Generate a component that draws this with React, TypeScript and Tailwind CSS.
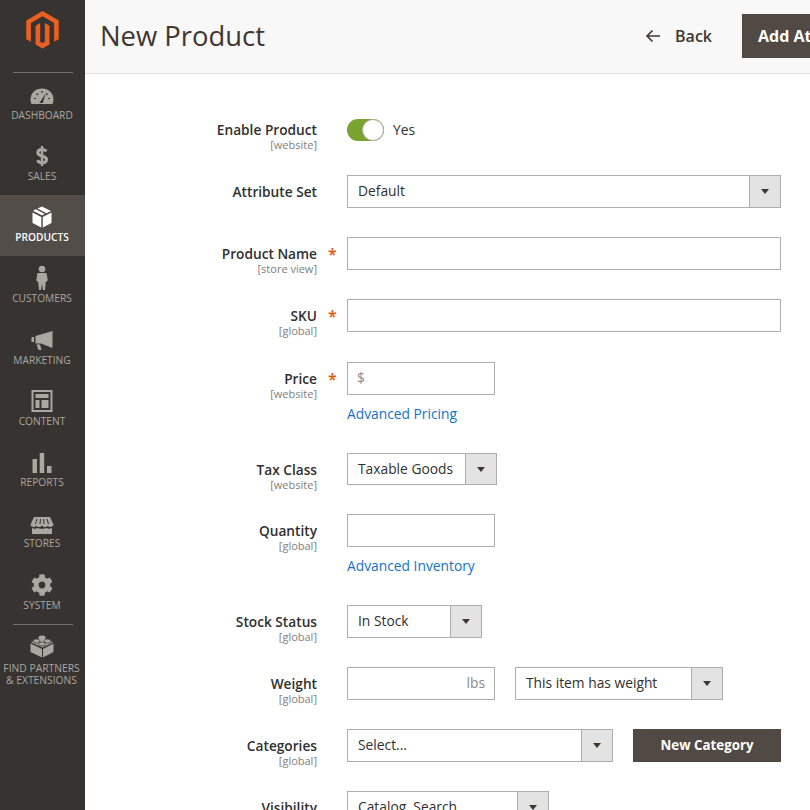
import type { ReactNode } from "react";
import { FaCog } from "react-icons/fa";

const Logo = () => (
  <svg width="33" height="38" viewBox="1.6 0 20.8 24" fill="#ec5f23">
    <path d="M12 24l-4.455-2.572v-12l2.97-1.715v12.001l1.485.902 1.485-.902V7.713l2.971 1.715v12L12 24zM22.391 6v12l-2.969 1.714V7.713L12 3.43 4.574 7.713v12L1.609 18V6L12 0l10.391 6z" />
  </svg>
);

const Gauge = () => (
  <svg width="24" height="24" viewBox="0 0 24 24">
    <path d="M1.500 21C.8 19.500.5 18 .5 16.500 .5 10 5.600 5.500 12 5.500S23.500 10 23.500 16.500C23.500 18 23.200 19.500 22.500 21Z" fill="#aaa6a0" />
    <path d="M9.500 20 15.500 10.500 12.800 20Z" fill="#373330" />
    <path d="M4 15.500H6M18 15.500H20M6.500 10.500 8 12M12 8V10M17.500 10.500 16 12" stroke="#373330" strokeWidth="1.200" />
  </svg>
);

const Dollar = () => (
  <svg width="24" height="24" viewBox="0 0 24 24" fill="none" stroke="#aaa6a0">
    <path d="M16.200 7.500C15.500 6.200 14 5.500 12 5.500 9.300 5.500 7.800 6.800 7.800 8.700 7.800 13 16.500 11 16.500 15.500 16.500 17.500 14.800 18.700 12 18.700 9.800 18.700 8.300 17.800 7.500 16.300" strokeWidth="3" />
    <path d="M12 2V22" strokeWidth="2.400" />
  </svg>
);

const Box = ({ color }: { color: string }) => (
  <svg width="24" height="24" viewBox="0 0 24 24" fill={color}>
    <path d="M2.500 7.500 11.300 12V22.500L2.500 18Z" />
    <path d="M21.500 7.500 12.800 12V22.500L21.500 18Z" />
    <path d="M7.500 3.500 12 1.500 21 6 16.500 8.200Z" />
    <path d="M5.800 4.300 3 5.700 12 10.300 14.800 9Z" />
  </svg>
);

const Person = () => (
  <svg width="24" height="24" viewBox="0 0 24 24" fill="#aaa6a0">
    <circle cx="12" cy="3" r="3.300" />
    <path d="M7.500 7H16.500L17.800 14.500 15.800 16 15 24H13L12 18 11 24H9L8.200 16 6.200 14.500Z" />
  </svg>
);

const Megaphone = () => (
  <svg width="24" height="24" viewBox="0 0 24 24" fill="#aaa6a0">
    <path d="M5.500 8 22.500 3V20L11 15.500H5.500Z" />
    <path d="M1.500 9H4V14H1.500Z" />
    <path d="M6.500 16.500H10L11.500 22H8.500Z" />
  </svg>
);

const Content = () => (
  <svg width="24" height="24" viewBox="0 0 24 24" fill="#aaa6a0">
    <path d="M1.500 1H22.500V23H1.500ZM3.500 3V21H20.500V3Z" fillRule="evenodd" />
    <path d="M5.500 5H18.500V9H5.500ZM5.500 11H9.500V19H5.500ZM11.500 11H18.500V19H11.500Z" />
  </svg>
);

const Reports = () => (
  <svg width="24" height="24" viewBox="0 0 24 24" fill="#aaa6a0">
    <path d="M2.500 9H7V23H2.500ZM9.700 3H14.200V23H9.700ZM17 16H21.500V23H17Z" />
  </svg>
);

const Stores = () => (
  <svg width="24" height="24" viewBox="0 0 24 24" fill="#aaa6a0">
    <path d="M.5 13.500 4 6H20L23.500 13.500C23.500 15 22 16 20.500 16 19 16 18 15.300 18 14.500 18 15.300 16.500 16 15 16S12.500 15.300 12 14.500C11.500 15.300 10.500 16 9 16S6 15.300 6 14.500C6 15.300 5 16 3.500 16 2 16 .5 15 .5 13.500Z" />
    <path d="M2 17C4 18 6 17.800 7.500 17 9.500 18 14.500 18 16.500 17 18 17.800 20 18 22 17V23H2Z" />
    <path d="M7 8 5.500 13M10.500 8 10 13M13.500 8 14 13M17 8 18.500 13" stroke="#373330" strokeWidth="1" />
  </svg>
);

const Lego = () => (
  <svg width="24" height="24" viewBox="0 0 24 24" fill="#aaa6a0">
    <path d="M.5 9.500 12 15V23.500L.5 18Z" />
    <path d="M23.500 9.500 13 15V23.500L23.500 18Z" />
    <path d="M12 3 23 8.300 12.500 13.500 1 8.300Z" />
    <ellipse cx="12" cy="3.500" rx="3.500" ry="2" />
    <ellipse cx="6.500" cy="7" rx="3.500" ry="2" stroke="#373330" strokeWidth=".7" />
    <ellipse cx="17.500" cy="7" rx="3.500" ry="2" stroke="#373330" strokeWidth=".7" />
    <ellipse cx="12" cy="10" rx="3.500" ry="2" stroke="#373330" strokeWidth=".7" />
  </svg>
);

const NavItem = ({ icon, label, active }: { icon: ReactNode; label: string; active?: boolean }) => (
  <div className={`flex h-[61.25px] flex-col items-center pt-[10px] pr-[1px] ${active ? "bg-[#524d49]" : ""}`}>
    <div className="flex h-[24px] w-[24px] items-center justify-center">{icon}</div>
    <span className={`mt-[1px] whitespace-nowrap text-[10.2px] leading-[14px] ${active ? "font-semibold text-white" : "text-[#aaa6a0]"}`}>
      {label}
    </span>
  </div>
);

const Sidebar = () => (
  <aside className="flex h-[810px] w-[85px] shrink-0 flex-col bg-[#373330]">
    <div className="flex h-[72.5px] shrink-0 flex-col items-center pt-[11px]">
      <Logo />
      <div className="mt-[23px] h-px w-[60px] bg-[#736e69]" />
    </div>
    <NavItem icon={<Gauge />} label="DASHBOARD" />
    <NavItem icon={<Dollar />} label="SALES" />
    <NavItem icon={<Box color="#ffffff" />} label="PRODUCTS" active />
    <NavItem icon={<Person />} label="CUSTOMERS" />
    <NavItem icon={<Megaphone />} label="MARKETING" />
    <NavItem icon={<Content />} label="CONTENT" />
    <NavItem icon={<Reports />} label="REPORTS" />
    <NavItem icon={<Stores />} label="STORES" />
    <NavItem icon={<FaCog size={22} color="#aaa6a0" />} label="SYSTEM" />
    <div className="mx-auto h-px w-[60px] bg-[#736e69]" />
    <div className="flex flex-col items-center pt-[9px] pr-[2px]">
      <Lego />
      <span className="mt-[4px] whitespace-nowrap text-center text-[10.3px] leading-[12.5px] text-[#aaa6a0]">
        FIND PARTNERS
        <br />& EXTENSIONS
      </span>
    </div>
  </aside>
);

const Header = () => (
  <header className="flex h-[74px] shrink-0 items-center border-b border-[#e3e3e3] bg-[#f8f8f8] pb-[2px] pl-[15px]">
    <h1 className="text-[27.4px] leading-[36px] text-[#41362f]">New Product</h1>
    <div className="ml-auto flex items-center">
      <svg width="16" height="14" viewBox="0 0 16 14" fill="none" stroke="#41362f" strokeWidth="1.600">
        <path d="M15 7H2M7.500 1.500 2 7 7.500 12.500" />
      </svg>
      <span className="ml-[14px] text-[16px] font-semibold text-[#41362f]">Back</span>
      <div className="ml-[30px] flex h-[44px] w-[68px] items-center overflow-hidden bg-[#514943] pl-[16px] text-[16px] font-bold whitespace-nowrap text-white">
        Add Attribute
      </div>
    </div>
  </header>
);

const Row = ({ label, scope, required, children, sub, className = "" }: { label: string; scope?: string; required?: boolean; children: ReactNode; sub?: string; className?: string }) => (
  <div className={`mb-[29px] flex shrink-0 ${className}`}>
    <div className="-mb-[5px] w-[232px] shrink-0 pt-[8px] text-right">
      <div className="text-[13.7px] leading-[18px] font-semibold text-[#303030]">{label}</div>
      {scope && <div className="text-[11px] leading-[12px] text-[#808080]">{scope}</div>}
    </div>
    <div className="w-[30px] shrink-0 pt-[8px] pl-[11px] text-[16px] leading-[18px] font-semibold">
      {required && <span className="text-[#eb5202]">*</span>}
    </div>
    <div className="min-w-0">
      {children}
      {sub && <div className="mt-[9px] text-[13.8px] leading-[20px] text-[#1173c6]">{sub}</div>}
    </div>
  </div>
);

const Select = ({ value, width, height = "h-[33px]" }: { value: string; width: string; height?: string }) => (
  <div className={`flex border border-[#adadad] bg-white text-[13.8px] text-[#303030] ${height} ${width}`}>
    <div className="flex flex-1 items-center pl-[10px] whitespace-nowrap">{value}</div>
    <div className="flex w-[31px] shrink-0 items-center justify-center border-l border-[#adadad] bg-[#e3e3e3]">
      <div className="h-0 w-0 border-x-[4.5px] border-t-[5px] border-x-transparent border-t-[#41362f]" />
    </div>
  </div>
);

const Input = ({ width, left, right }: { width: string; left?: string; right?: string }) => (
  <div className={`flex h-[33px] items-center justify-between border border-[#adadad] bg-white px-[9px] text-[13.8px] text-[#8a8a8a] ${width}`}>
    <span>{left}</span>
    <span>{right}</span>
  </div>
);

export default function App() {
  return (
    <div className="flex h-[810px] w-[810px] overflow-hidden bg-white font-['Open_Sans',sans-serif]">
      <Sidebar />
      <main className="flex min-w-0 flex-1 flex-col">
        <Header />
        <div className="flex flex-col pt-[39px]">
          <Row label="Enable Product" scope="[website]">
            <div className="flex h-[33px] items-start pt-[6px]">
              <div className="flex h-[22px] w-[37px] justify-end rounded-full bg-[#79a22e]">
                <div className="h-[22px] w-[22px] rounded-full border border-[#adadad] bg-white" />
              </div>
              <span className="ml-[9px] text-[13.8px] leading-[22px] text-[#303030]">Yes</span>
            </div>
          </Row>
          <Row label="Attribute Set">
            <Select value="Default" width="w-[434px]" />
          </Row>
          <Row label="Product Name" scope="[store view]" required>
            <Input width="w-[434px]" />
          </Row>
          <Row label="SKU" scope="[global]" required>
            <Input width="w-[434px]" />
          </Row>
          <Row label="Price" scope="[website]" required sub="Advanced Pricing" className="mt-[1px]">
            <Input width="w-[148px]" left="$" />
          </Row>
          <Row label="Tax Class" scope="[website]">
            <Select value="Taxable Goods" width="w-[150px]" height="h-[32px]" />
          </Row>
          <Row label="Quantity" scope="[global]" sub="Advanced Inventory" className="-mt-[1px]">
            <Input width="w-[148px]" />
          </Row>
          <Row label="Stock Status" scope="[global]">
            <Select value="In Stock" width="w-[135px]" />
          </Row>
          <Row label="Weight" scope="[global]">
            <div className="flex gap-[20px]">
              <Input width="w-[148px]" right="lbs" />
              <Select value="This item has weight" width="w-[208px]" />
            </div>
          </Row>
          <Row label="Categories" scope="[global]">
            <div className="flex gap-[20px]">
              <Select value="Select..." width="w-[266px]" />
              <div className="flex h-[33px] w-[148px] items-center justify-center bg-[#514943] text-[13.3px] font-bold text-white">
                New Category
              </div>
            </div>
          </Row>
          <Row label="Visibility" scope="[store view]">
            <Select value="Catalog, Search" width="w-[202px]" />
          </Row>
        </div>
      </main>
    </div>
  );
}
